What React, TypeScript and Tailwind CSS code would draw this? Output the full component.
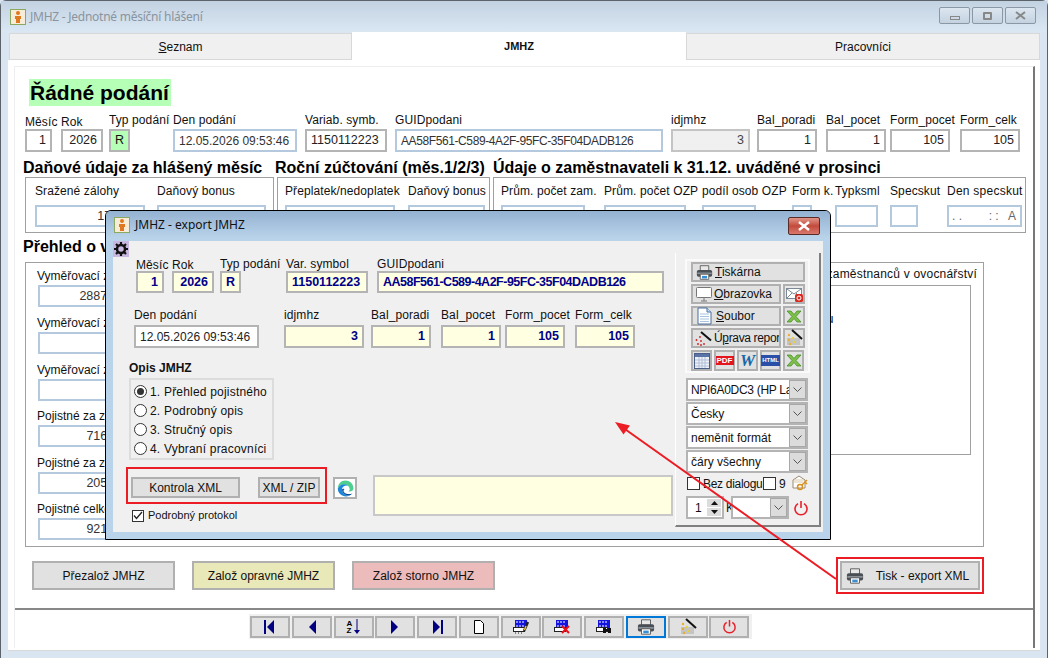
import React from "react";

const grayBox = "border-2 border-[#b4b4b4] bg-white text-[#222]";
const blueBox = "border-2 border-[#b4c9de] bg-white text-[#333]";
const yellowBox = "border-2 border-[#b4b4b4] bg-[#ffffe1] text-[#00008b] font-bold";

function Field({ label, value = "", className = "", box = grayBox, right = false, h = "h-[23px]", lab = "h-[16px]", val = "text-[12.500px]" }: { label?: string; value?: string; className?: string; box?: string; right?: boolean; h?: string; lab?: string; val?: string }) {
  return (
    <div className={"flex flex-col shrink-0 " + className}>
      {label !== undefined && <div className={"whitespace-nowrap leading-[14px] tracking-[0.1px] " + lab}>{label}</div>}
      <div className={"flex items-center overflow-hidden whitespace-nowrap px-[4px] " + h + " " + box + (right ? " justify-end" : "")}><span className={val}>{value}</span></div>
    </div>
  );
}

function Btn({ children, className = "" }: { children?: React.ReactNode; className?: string }) {
  return <div className={"flex items-center justify-center border-2 border-[#b0b0b0] bg-[#e1e1e1] shrink-0 whitespace-nowrap [&>svg]:shrink-0 " + className}>{children}</div>;
}

const Printer = ({ s = 20 }: { s?: number }) => (
  <svg width={s} height={s} viewBox="0 0 20 20">
    <path d="M5 2h10v6H5z" fill="#e8e8e8" stroke="#555" />
    <rect x="1" y="7" width="18" height="8" rx="2" fill="#4a4f55" />
    <rect x="1.500" y="10" width="17" height="2" fill="#8a9097" />
    <path d="M5 12h10v6H5z" fill="#fff" stroke="#555" />
    <rect x="7" y="14" width="6" height="3" fill="#3a8fd0" />
  </svg>
);
const Power = ({ s = 16 }: { s?: number }) => (
  <svg width={s} height={s} viewBox="0 0 16 16" fill="none" stroke="#e8202a" strokeWidth="1.600">
    <path d="M5 3.600a6 6 0 1 0 6 0" />
    <path d="M8 1v7" />
  </svg>
);
const Wand = () => (
  <svg width="17" height="16" viewBox="0 0 17 16">
    <path d="M6 2l10 8.500" stroke="#111" strokeWidth="2" />
    <circle cx="5" cy="7" r="0.900" fill="#d02020" /><circle cx="1.500" cy="10" r="0.900" fill="#d02020" />
    <circle cx="6" cy="11" r="0.900" fill="#d02020" /><circle cx="3" cy="14" r="0.900" fill="#d02020" />
    <circle cx="9" cy="14" r="0.900" fill="#d02020" /><circle cx="6" cy="15" r="0.900" fill="#d02020" />
  </svg>
);
const WandBig = () => (
  <svg width="18" height="18" viewBox="0 0 18 18">
    <path d="M2 9h13v7H2z" fill="#c4c4c4" />
    <path d="M7 1l10 9" stroke="#111" strokeWidth="2" />
    <circle cx="4" cy="6" r="1.200" fill="#e8b030" /><circle cx="8" cy="9" r="1.200" fill="#e8d040" />
    <circle cx="4" cy="11" r="1.200" fill="#e8b030" /><circle cx="9" cy="13" r="1.200" fill="#e8d040" />
    <circle cx="5" cy="15" r="1.200" fill="#e8b030" />
  </svg>
);
const Xls = () => (
  <svg width="16" height="13" viewBox="0 0 16 13">
    <path d="M1 1h4l3 3.500L11 1h4L10 6.500 15 12h-4L8 8.500 5 12H1l5-5.500z" fill="#7cc04a" stroke="#4a8f28" strokeWidth="0.800" />
  </svg>
);
const Doc = () => (
  <svg width="15" height="18" viewBox="0 0 15 18">
    <path d="M1 1h9l4 4v12H1z" fill="#fff" stroke="#4a6fa0" />
    <path d="M10 1v4h4" fill="#cfe0f0" stroke="#4a6fa0" />
    <path d="M3 7h9M3 9.500h9M3 12h9M3 14.500h9" stroke="#a8c4e0" />
  </svg>
);
const Mail = () => (
  <svg width="17" height="15" viewBox="0 0 17 15">
    <rect x="0.500" y="1.500" width="15" height="10" fill="#fff" stroke="#7c8a98" />
    <path d="M1 2l7 5 7-5M1 11l5-5M15 11l-5-5" fill="none" stroke="#7c8a98" />
    <rect x="9" y="7" width="8" height="8" rx="1.500" fill="#d82a20" />
    <circle cx="13" cy="11" r="2" fill="none" stroke="#fff" />
  </svg>
);
const Monitor = () => (
  <svg width="16" height="15" viewBox="0 0 16 15" fill="none" stroke="#777">
    <rect x="0.500" y="0.500" width="15" height="10" rx="1" fill="#fff" />
    <path d="M8 11v3M5 14h6" />
  </svg>
);
const Table = () => (
  <svg width="16" height="16" viewBox="0 0 16 16">
    <rect x="0.500" y="0.500" width="15" height="15" fill="#eef2f8" stroke="#4a5f88" />
    <rect x="1" y="1" width="14" height="3" fill="#5a74a8" />
    <path d="M1 7h14M1 10h14M1 13h14M5 4v11M8 4v11M11 4v11" stroke="#b0bfd8" />
  </svg>
);
const Edge = () => (
  <svg width="17" height="17" viewBox="0 0 17 17">
    <path d="M8.500.500a8 8 0 0 1 8 8c0 2-2 3-4 3h-1c1-1 1.500-2 1-3.500C11.500 5 8 3.500 4 5 2.500 6 1.500 7 .800 8.500 1 4 4 .500 8.500.500z" fill="#4fcf8f" />
    <path d="M.800 8.500C1.500 7 2.500 6 4 5c2-1 5-.8 7 .5-3-.5-6 1-6 4 0 3 3 6.500 7.500 6A8 8 0 0 1 .800 8.500z" fill="#1b87d6" />
    <path d="M5 9.500c0 3 3 6.500 7.500 6 1-.4 2-1 2.800-2-2.500 1-6 .8-8-1C6 11.500 6.500 10 7.500 9 6.500 8.500 5.500 8.500 5 9.500z" fill="#0c4f9e" />
  </svg>
);
const Key = () => (
  <svg width="17" height="17" viewBox="0 0 17 17">
    <path d="M1 5l6-4 6 4v8H1z" fill="#fff" stroke="#9a8a70" />
    <path d="M2 5h10M2 7h9" stroke="#d8c8a8" />
    <circle cx="8" cy="12" r="2.500" fill="none" stroke="#d89020" strokeWidth="1.500" />
    <path d="M10 10l5-5M13 7l2 2" stroke="#d89020" strokeWidth="1.500" />
  </svg>
);
const BlueTable = () => (
  <g>
    <rect x="2" y="1" width="12" height="4" fill="#1414e0" />
    <rect x="2" y="5" width="12" height="4" fill="#1414e0" />
    <path d="M3 3h2M6 3h2M9 3h2M3 7h2M6 7h2M9 7h2" stroke="#fff" />
    <rect x="0.500" y="8.500" width="11" height="4" fill="#fff" stroke="#222" />
  </g>
);
const Tri = ({ dir, bar }: { dir: "l" | "r"; bar?: boolean }) => (
  <svg width="12" height="14" viewBox="0 0 12 14" fill="#000080">
    {dir === "l" ? <path d="M10 0v14L3 7z" /> : <path d="M2 0v14l7-7z" />}
    {bar && (dir === "l" ? <rect x="0" y="0" width="2" height="14" /> : <rect x="10" y="0" width="2" height="14" />)}
  </svg>
);

function Radio({ label, on = false }: { label: string; on?: boolean }) {
  return (
    <div className="flex items-center h-[19px] whitespace-nowrap tracking-[0.2px]">
      <div className="w-[13px] h-[13px] rounded-full border border-[#333] bg-white flex items-center justify-center mr-[3px] ml-[3px] shrink-0">
        {on && <div className="w-[7px] h-[7px] rounded-full bg-[#333]" />}
      </div>
      {label}
    </div>
  );
}

function Combo({ text, className = "" }: { text: string; className?: string }) {
  return (
    <div className={"flex items-center border-2 border-[#b4b4b4] bg-white pl-[3px] overflow-hidden whitespace-nowrap " + className}>
      <span className="flex-1 overflow-hidden">{text}</span>
      <div className="w-[17px] h-full bg-[#dcdcdc] border border-[#a8a8a8] flex items-center justify-center shrink-0">
        <svg width="9" height="5" viewBox="0 0 9 5" fill="none" stroke="#555"><path d="M0.500 0.500l4 4 4-4" /></svg>
      </div>
    </div>
  );
}

const leftRows: { label: string; value: string; second?: boolean; gap: string }[] = [
  { label: "Vyměřovací základ", value: "288700000", gap: "" },
  { label: "Vyměřovací základ", value: "", gap: "mt-[9px]" },
  { label: "Vyměřovací základ", value: "", gap: "mt-[9px]" },
  { label: "Pojistné za zaměstnance", value: "71600000", gap: "mt-[8px]" },
  { label: "Pojistné za zaměstnavatele", value: "20500000", gap: "mt-[9px]" },
  { label: "Pojistné celkem", value: "92100000", second: true, gap: "mt-[8px]" },
];

export default function App() {
  return (
    <div className="relative w-[1048px] h-[658px] overflow-hidden bg-[#d9e6f2] font-['Liberation_Sans',Arial,sans-serif] text-[12px] text-[#111]">
      {/* main window */}
      <div className="flex flex-col h-full border-x border-t border-[#5c636b] rounded-t-[6px]">
        <div className="h-[31px] shrink-0 flex items-center pl-[9px] pr-[11px] bg-gradient-to-b from-[#c3d2e2] to-[#dae7f3]">
          <AppIcon />
          <span className="ml-[4px] text-[#8a949e] font-['Noto_Sans',sans-serif] text-[12px] tracking-[-0.250px]">JMHZ - Jednotné měsíční hlášení</span>
          <div className="ml-auto flex gap-[2px] mt-[-2px]">
            <WinBtn><div className="w-[10px] h-[4px] border border-[#888] mt-[5px]" /></WinBtn>
            <WinBtn><div className="w-[9px] h-[8px] border-2 border-[#888] rounded-[1px]" /></WinBtn>
            <WinBtn><svg width="11" height="9" viewBox="0 0 11 9" stroke="#888" strokeWidth="2"><path d="M1 1l9 7M10 1l-9 7" /></svg></WinBtn>
          </div>
        </div>

        <div className="ml-[7px] mr-[7px] flex h-[28px] shrink-0">
          <div className="w-[343px] ml-[1px] mt-[1px] border border-[#d8d8d8] bg-[#f0f0f0] flex items-center justify-center"><span><span className="underline">S</span>eznam</span></div>
          <div className="w-[334px] bg-white flex items-center justify-center font-bold text-[11px] mb-[-1px]">JMHZ</div>
          <div className="flex-1 mt-[1px] border border-[#d8d8d8] bg-[#f0f0f0] flex items-center justify-center">Pracovníci</div>
        </div>

        <div className="ml-[7px] mr-[7px] flex-1 bg-white pt-[6px] pl-[6px] pr-[5px] pb-[2px] border-b border-[#d8d8d8]">
          <div className="h-[582px] border-l border-t border-[#eeeeee] border-r-2 border-r-[#777]">
            <div className="ml-[14px] mt-[12px] w-[142px] h-[27px] bg-[#b6ffb6] flex items-center pl-[1px] font-bold text-[21px] leading-none text-black whitespace-nowrap">Řádné podání</div>

            <div className="flex mt-[7px] ml-[10px]">
              <Field label="Měsíc" value="1" right className="w-[27px]" lab="h-[16px] pt-[2px]" />
              <Field label="Rok" value="2026" right className="w-[42px] ml-[9px]" lab="h-[16px] pt-[2px]" />
              <Field label="Typ podání" value="R" className="w-[21px] ml-[6px]" box="border-2 border-[#b4b4b4] bg-[#b6ffb6]" />
              <Field label="Den podání" value="12.05.2026 09:53:46" className="w-[124px] ml-[43px]" box={blueBox} val="text-[12px]" />
              <Field label="Variab. symb." value="1150112223" className="w-[82px] ml-[8px]" />
              <Field label="GUIDpodani" value="AA58F561-C589-4A2F-95FC-35F04DADB126" className="w-[268px] ml-[8px]" box={blueBox} val="text-[12px] tracking-[-0.400px]" />
              <Field label="idjmhz" value="3" right className="w-[79px] ml-[8px]" box="border-2 border-[#c4c4c4] bg-[#f0f0f0] text-[#444]" />
              <Field label="Bal_poradi" value="1" right className="w-[60px] ml-[7px]" />
              <Field label="Bal_pocet" value="1" right className="w-[60px] ml-[9px]" />
              <Field label="Form_pocet" value="105" right className="w-[60px] ml-[4px]" />
              <Field label="Form_celk" value="105" right className="w-[60px] ml-[10px]" />
            </div>

            <div className="flex mt-[8px] ml-[8px] h-[16px] items-center font-bold text-[16px] text-black whitespace-nowrap">
              <div className="w-[252px]">Daňové údaje za hlášený měsíc</div>
              <div className="w-[218px]">Roční zúčtování (měs.1/2/3)</div>
              <div>Údaje o zaměstnavateli k 31.12. uváděné v prosinci</div>
            </div>

            <div className="flex mt-[1px] ml-[10px] gap-[3px] h-[56px]">
              <div className="w-[249px] border border-[#a0a0a0] flex pt-[6px] pl-[9px]">
                <Field label="Sražené zálohy" value="170000" right className="w-[110px]" box={blueBox} h="h-[22px]" lab="h-[21px]" />
                <Field label="Daňový bonus" className="w-[109px] ml-[12px]" box={blueBox} h="h-[22px]" lab="h-[21px]" />
              </div>
              <div className="w-[213px] border border-[#a0a0a0] flex pt-[6px] pl-[7px]">
                <Field label="Přeplatek/nedoplatek" className="w-[110px]" box={blueBox} h="h-[22px]" lab="h-[21px]" />
                <Field label="Daňový bonus" className="w-[77px] ml-[13px]" box={blueBox} h="h-[22px]" lab="h-[21px]" />
              </div>
              <div className="w-[533px] border border-[#a0a0a0] flex pt-[6px] pl-[7px]">
                <Field label="Prům. počet zam." className="w-[84px]" box={blueBox} h="h-[22px]" lab="h-[21px]" />
                <Field label="Prům. počet OZP" className="w-[82px] ml-[19px]" box={blueBox} h="h-[22px]" lab="h-[21px]" />
                <Field label="podíl osob OZP" className="w-[54px] ml-[16px]" box={blueBox} h="h-[22px]" lab="h-[21px]" />
                <Field label="Form k." className="w-[20px] ml-[36px]" box={blueBox} h="h-[22px]" lab="h-[21px]" />
                <Field label="Typksml" className="w-[43px] ml-[23px]" box={blueBox} h="h-[22px]" lab="h-[21px]" />
                <Field label="Specskut" className="w-[28px] ml-[12px]" box={blueBox} h="h-[22px]" lab="h-[21px]" />
                <Field label="Den specskut" value=". .        : :   A" right className="w-[75px] ml-[29px]" box={blueBox + " !text-[#666]"} h="h-[22px]" lab="h-[21px] tracking-[0.250px]" val="whitespace-pre text-[12px]" />
              </div>
            </div>

            <div className="mt-[6px] ml-[8px] h-[16px] flex items-center font-bold text-[16px] text-black whitespace-nowrap">Přehled o vyměřovacích základech</div>

            <div className="mt-[7px] ml-[10px] w-[959px] h-[285px] border border-[#a0a0a0] flex pl-[12px] pt-[6px]">
              <div className="flex flex-col">
                {leftRows.map((r, i) => (
                  <div key={i} className={r.gap}>
                    <div className="h-[16px] leading-[14px] whitespace-nowrap ml-[-1px]">{r.label}</div>
                    <div className="flex">
                      <div className={"w-[110px] h-[22px] px-[4px] flex items-center justify-end overflow-hidden text-[12.500px] " + blueBox}>{r.value}</div>
                      {r.second && <div className={"w-[68px] h-[22px] ml-[9px] " + blueBox} />}
                    </div>
                  </div>
                ))}
              </div>
              <div className="ml-auto mr-[12px] w-[300px] flex flex-col items-end">
                <div className="h-[15px] leading-[14px] tracking-[0.200px] whitespace-nowrap mt-[-2px] mr-[-6px]">Příplatky zaměstnanců v ovocnářství</div>
                <div className="w-full h-[170px] mt-[3px] border border-[#a0a0a0] pt-[24px] pl-[132px]">počtu</div>
              </div>
            </div>

            <div className="flex items-center mt-[10px] ml-[17px] h-[37px]">
              <Btn className="w-[143px] h-[29px]">Přezalož JMHZ</Btn>
              <Btn className="w-[143px] h-[29px] ml-[17px] !bg-[#e8e8b8]">Založ opravné JMHZ</Btn>
              <Btn className="w-[143px] h-[29px] ml-[17px] !bg-[#ecbcbc]">Založ storno JMHZ</Btn>
              <div className="ml-[341px] w-[148px] h-[37px] border-[2px] border-[#ec1c24] p-[2px]">
                <Btn className="w-full h-full pr-[5px] gap-[12px]"><Printer s={18} /><span>Tisk - export XML</span></Btn>
              </div>
            </div>

            <div className="mt-[14px] border-t-2 border-[#888]" />
            <div className="mt-[4px] ml-[234px] w-[503px] h-[25px] bg-[#f0f0f0] flex items-center gap-[1.750px] pl-[1px]">
              <Btn className="w-[40px] h-[22px]"><Tri dir="l" bar /></Btn>
              <Btn className="w-[40px] h-[22px]"><Tri dir="l" /></Btn>
              <Btn className="w-[40px] h-[22px]">
                <span className="flex flex-col leading-[7px] text-[8px] font-bold text-black mr-[2px]"><span>A</span><span>Z</span></span>
                <svg width="6" height="16" viewBox="0 0 6 16" fill="#000080"><path d="M2.500 0h1v11h-1zM0 11h6l-3 4z" /></svg>
              </Btn>
              <Btn className="w-[40px] h-[22px]"><Tri dir="r" /></Btn>
              <Btn className="w-[40px] h-[22px]"><Tri dir="r" bar /></Btn>
              <Btn className="w-[40px] h-[22px]"><svg width="10" height="14" viewBox="0 0 10 14"><path d="M.500.500h6l3 3v10h-9z" fill="#fff" stroke="#000" /></svg></Btn>
              <Btn className="w-[40px] h-[22px]"><svg width="16" height="15" viewBox="0 0 16 15"><BlueTable /><path d="M2 14h1M5 14h1M8 14h1" stroke="#222" /><path d="M15 3l-4 9" stroke="#222" strokeWidth="2.500" /><path d="M13 7l-1.500 4" stroke="#e8c040" strokeWidth="1.500" /></svg></Btn>
              <Btn className="w-[40px] h-[22px]"><svg width="16" height="15" viewBox="0 0 16 15"><BlueTable /><path d="M8 7l7 7M15 7l-7 7" stroke="#e8101a" strokeWidth="2" /></svg></Btn>
              <Btn className="w-[40px] h-[22px]"><svg width="16" height="15" viewBox="0 0 16 15"><BlueTable /><path d="M7 9h3v5H7zM12 9h3v5h-3zM10 10h2v2h-2z" fill="#111" /></svg></Btn>
              <Btn className="w-[40px] h-[22px] !border-[#0078d7]"><Printer s={18} /></Btn>
              <Btn className="w-[40px] h-[22px]"><WandBig /></Btn>
              <Btn className="w-[40px] h-[22px]"><Power s={15} /></Btn>
            </div>
          </div>
        </div>
        <div className="h-[7px] shrink-0" />
      </div>

      {/* export dialog */}
      <div className="absolute left-[105px] top-[210px] w-[726px] h-[330px] border border-black rounded-t-[6px] overflow-hidden bg-[#b9d3ea] flex flex-col">
        <div className="h-[27px] shrink-0 flex items-center pl-[8px] bg-gradient-to-b from-[#93b1d1] to-[#b9d3ea]">
          <AppIcon />
          <span className="ml-[5px] font-['Noto_Sans',sans-serif] text-[12px] text-[#111]">JMHZ - export JMHZ</span>
          <div className="ml-auto mr-[10px] mt-[2px] w-[32px] h-[18px] border border-[#5a2a24] rounded-[2px] bg-gradient-to-b from-[#e0958a] via-[#c24a3c] to-[#d8796c] flex items-center justify-center">
            <svg width="14" height="10" viewBox="0 0 14 10" stroke="#fff" strokeWidth="2.500"><path d="M2 1l10 8M12 1L2 9" /></svg>
          </div>
        </div>
        <div className="mt-[3px] ml-[7px] mr-[7px] h-[291px] bg-[#f0f0f0] flex">
          <div className="w-[562px] shrink-0">
            <div className="w-[16px] h-[16px] bg-[#c8b8e0] flex items-center justify-center">
              <svg width="14" height="14" viewBox="0 0 14 14"><circle cx="7" cy="7" r="4" fill="none" stroke="#111" strokeWidth="2.500" /><path d="M7 0v3M7 11v3M0 7h3M11 7h3M2 2l2 2M10 10l2 2M12 2l-2 2M4 10l-2 2" stroke="#111" strokeWidth="2.200" /></svg>
            </div>
            <div className="flex ml-[23px]">
              <Field label="Měsíc" value="1" right className="w-[28px]" box={yellowBox} h="h-[22px]" lab="h-[14px] pt-[1px]" />
              <Field label="Rok" value="2026" right className="w-[42px] ml-[8px]" box={yellowBox} h="h-[22px]" lab="h-[14px] pt-[1px]" />
              <Field label="Typ podání" value="R" className="w-[21px] ml-[6px]" box={yellowBox} h="h-[22px]" lab="h-[14px]" />
              <Field label="Var. symbol" value="1150112223" className="w-[82px] ml-[45px]" box={yellowBox} h="h-[22px]" lab="h-[14px]" />
              <Field label="GUIDpodani" value="AA58F561-C589-4A2F-95FC-35F04DADB126" className="w-[287px] ml-[9px]" box={yellowBox} h="h-[22px]" lab="h-[14px]" val="text-[12.500px] tracking-[-0.500px]" />
            </div>
            <div className="flex mt-[15px] ml-[21px]">
              <Field label="Den podání" value="12.05.2026 09:53:46" className="w-[125px]" lab="h-[17px]" val="text-[12px]" />
              <Field label="idjmhz" value="3" right className="w-[80px] ml-[25px]" box={yellowBox} lab="h-[17px]" />
              <Field label="Bal_poradi" value="1" right className="w-[60px] ml-[7px]" box={yellowBox} lab="h-[17px]" />
              <Field label="Bal_pocet" value="1" right className="w-[60px] ml-[10px]" box={yellowBox} lab="h-[17px]" />
              <Field label="Form_pocet" value="105" right className="w-[60px] ml-[4px]" box={yellowBox} lab="h-[17px]" />
              <Field label="Form_celk" value="105" right className="w-[60px] ml-[10px]" box={yellowBox} lab="h-[17px]" />
            </div>
            <div className="mt-[13px] ml-[16px] h-[14px] leading-[14px] font-bold">Opis JMHZ</div>
            <div className="mt-[3px] ml-[16px] w-[145px] h-[82px] border-2 border-[#dcdcdc] pt-[2px]">
              <Radio label="1. Přehled pojistného" on />
              <Radio label="2. Podrobný opis" />
              <Radio label="3. Stručný opis" />
              <Radio label="4. Vybraní pracovníci" />
            </div>
            <div className="flex mt-[7px] ml-[13px] items-start">
              <div className="shrink-0">
                <div className="w-[201px] h-[37px] border-2 border-[#ec1c24] flex items-center pl-[3px] pt-[4px]">
                  <Btn className="w-[109px] h-[21px]">Kontrola XML</Btn>
                  <Btn className="w-[62px] h-[21px] ml-[18px]">XML / ZIP</Btn>
                </div>
                <div className="mt-[5px] ml-[6px] flex items-center h-[13px] text-[11px] whitespace-nowrap">
                  <div className="w-[12px] h-[12px] border border-[#333] bg-white flex items-center justify-center mr-[4px]">
                    <svg width="10" height="9" viewBox="0 0 10 9" fill="none" stroke="#222" strokeWidth="1.300"><path d="M1 4.500l2.500 3L9 1" /></svg>
                  </div>
                  Podrobný protokol
                </div>
              </div>
              <Btn className="w-[24px] h-[22px] ml-[6px] mt-[10px] !bg-white"><Edge /></Btn>
              <div className="w-[300px] h-[41px] ml-[16px] mt-[8px] border-2 border-[#c8c8c8] bg-[#ffffe1]" />
            </div>
          </div>

          <div className="w-[146px] h-[274px] mt-[12px] border-r-2 border-b-2 border-[#808080] border-l border-l-white pl-[9px] pt-[6px]">
            <div className="w-[125px] h-[114px] border-2 border-[#fafafa] pl-[4px] pt-[1px] flex flex-col gap-[2px]">
              <Btn className="w-[114px] h-[20px] !justify-start pl-[3px] gap-[2px]"><Printer s={17} /><span><span className="underline">T</span>iskárna</span></Btn>
              <div className="flex gap-[2px]">
                <Btn className="w-[90px] h-[20px] !justify-start pl-[3px] gap-[2px]"><Monitor /><span><span className="underline">O</span>brazovka</span></Btn>
                <Btn className="w-[22px] h-[20px] !bg-[#e8e8e8]"><Mail /></Btn>
              </div>
              <div className="flex gap-[2px]">
                <Btn className="w-[90px] h-[20px] !justify-start pl-[4px] gap-[4px]"><Doc /><span><span className="underline">S</span>oubor</span></Btn>
                <Btn className="w-[22px] h-[20px]"><Xls /></Btn>
              </div>
              <div className="flex gap-[2px]">
                <Btn className="w-[90px] h-[20px] !justify-start pl-[2px] gap-[2px] overflow-hidden"><Wand /><span className="tracking-[-0.350px]">Ú<span className="underline">p</span>rava report</span></Btn>
                <Btn className="w-[22px] h-[20px]"><WandBig /></Btn>
              </div>
              <div className="flex gap-[2px]">
                <Btn className="w-[21px] h-[21px]"><Table /></Btn>
                <Btn className="w-[21px] h-[21px]"><span className="bg-[#e4141e] text-white text-[8px] font-bold leading-[9px] px-[1px]">PDF</span></Btn>
                <Btn className="w-[21px] h-[21px]"><span className="text-[#1668a8] text-[17px] font-bold italic font-['Liberation_Serif',serif] leading-none">W</span></Btn>
                <Btn className="w-[21px] h-[21px]"><span className="bg-[#2a4fa8] text-white text-[6px] font-bold leading-[11px] px-[1px]">HTML</span></Btn>
                <Btn className="w-[21px] h-[21px]"><Xls /></Btn>
              </div>
            </div>
            <div className="mt-[5px] flex flex-col gap-[1px] ml-[1px]">
              <Combo text="NPI6A0DC3 (HP Laser" className="w-[122px] h-[23px] tracking-[-0.300px]" />
              <Combo text="Česky" className="w-[122px] h-[23px]" />
              <Combo text="neměnit formát" className="w-[122px] h-[23px]" />
              <Combo text="čáry všechny" className="w-[122px] h-[23px]" />
            </div>
            <div className="mt-[3px] flex items-center h-[15px] whitespace-nowrap">
              <div className="w-[13px] h-[13px] border border-[#333] bg-white ml-[2px] mr-[3px] shrink-0" />
              <span className="w-[60px] tracking-[-0.300px]">Bez dialogu</span>
              <div className="w-[13px] h-[13px] border border-[#333] bg-white mr-[3px] shrink-0" />
              9
              <span className="ml-[6px]"><Key /></span>
            </div>
            <div className="mt-[5px] flex items-center h-[23px] ml-[1px]">
              <div className="w-[38px] h-[23px] border-2 border-[#b4b4b4] bg-white flex items-center pl-[7px]">
                1
                <div className="ml-auto mr-[1px] flex flex-col gap-[1px]">
                  <div className="w-[14px] h-[8px] bg-[#dcdcdc] flex items-center justify-center"><svg width="7" height="4" viewBox="0 0 7 4"><path d="M3.500 0L7 4H0z" fill="#111" /></svg></div>
                  <div className="w-[14px] h-[8px] bg-[#dcdcdc] flex items-center justify-center"><svg width="7" height="4" viewBox="0 0 7 4"><path d="M3.500 4L7 0H0z" fill="#111" /></svg></div>
                </div>
              </div>
              <span className="ml-[2px] w-[5px] overflow-hidden">K</span>
              <Combo text="" className="w-[58px] h-[23px]" />
              <span className="ml-[4px]"><Power s={16} /></span>
            </div>
          </div>
        </div>
      </div>

      {/* arrow */}
      <svg className="absolute left-0 top-0 pointer-events-none" width="1048" height="658" viewBox="0 0 1048 658">
        <path d="M836 579L622 427" stroke="#ec1c24" strokeWidth="2" />
        <path d="M615 422l15 3.500-6.500 9z" fill="#ec1c24" />
      </svg>
    </div>
  );
}

function WinBtn({ children }: { children: React.ReactNode }) {
  return <div className="w-[31px] h-[17px] border border-[#8a97a5] rounded-[2px] bg-gradient-to-b from-[#dce6f0] to-[#c4d2e0] flex items-center justify-center">{children}</div>;
}

function AppIcon() {
  return (
    <div className="w-[16px] h-[16px] border border-[#8aa860] bg-[#f6ecd8] flex items-center justify-center shrink-0">
      <svg width="10" height="12" viewBox="0 0 10 12"><circle cx="5" cy="2" r="2" fill="#e07820" /><path d="M2 5h6v3H7v4H3V8H2z" fill="#e07820" /></svg>
    </div>
  );
}
